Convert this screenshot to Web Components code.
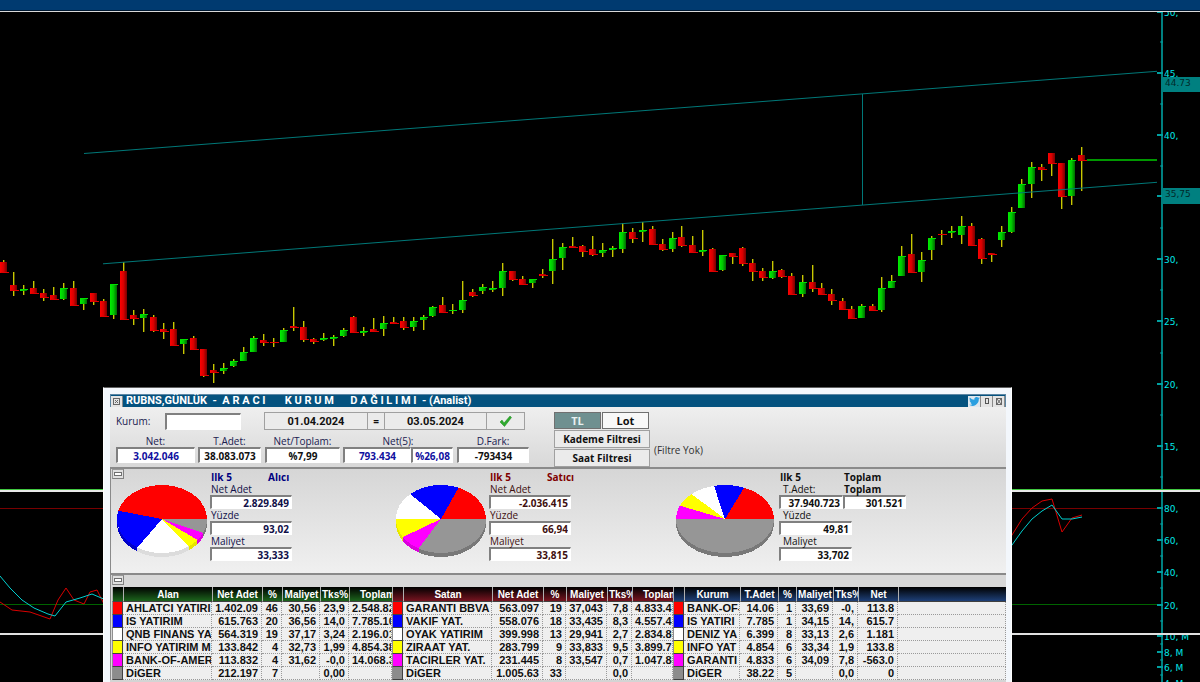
<!DOCTYPE html>
<html lang="tr">
<head>
<meta charset="utf-8">
<title>RUBNS - Aracı Kurum Dağılımı</title>
<style>
html,body{margin:0;background:#000}
body{font-family:"Open Sans","Noto Sans",sans-serif}
</style>
</head>
<body>
<trading-desk></trading-desk>
<script>
const NAVY='#003a70';

/* Price scale drawn on the right side of a chart pane */
class PriceAxis extends HTMLElement{
  connectedCallback(){
    const h=+this.getAttribute('span');
    const pct=v=>(v/h*100)+'%';
    const major=JSON.parse(this.getAttribute('major'));
    const minor=JSON.parse(this.getAttribute('minor'));
    const tags=JSON.parse(this.getAttribute('tags')||'[]');
    let s='<rect x="4" y="0" width="2" height="100%" fill="#008080"/>';
    for(const [t,y] of major){
      s+=`<line x1="0" x2="6" y1="${pct(y)}" y2="${pct(y)}" stroke="#00a0a0" stroke-width="2"/>`;
      s+=`<text x="7" y="${pct(y)}" dy="4">${t}</text>`;
    }
    for(const y of minor)s+=`<line x1="3" x2="6" y1="${pct(y)}" y2="${pct(y)}" stroke="#00a0a0"/>`;
    for(const [t,y,hh] of tags){
      s+=`<rect x="5" y="${pct(y)}" width="40" height="${hh}" fill="#008080"/>`;
      s+=`<text class="tag" x="8" y="${pct(y)}" dy="9">${t}</text>`;
    }
    this.attachShadow({mode:'open'}).innerHTML=`<style>
      :host{display:block;overflow:hidden}
      svg{display:block;width:100%;height:100%}
      text{font:9px "DejaVu Sans",sans-serif;fill:#00e8e8}
      .tag{fill:#002a2a}
    </style><svg>${s}</svg>`;
  }
}
customElements.define('price-axis',PriceAxis);

/* Candles: x, body top, body bottom, high, low, direction (1 up) */
const CANDLES=[
[4,262,273,260,272,0],[14,285,291,272,296,0],[24,289,291,285,295,1],[34,288,294,281,294,0],[44,293,298,289,301,0],[54,295,300,287,299,0],[64,288,299,283,300,1],[74,288,306,281,305,0],[84,298,304,298,310,1],[94,293,302,293,305,0],[104,301,317,299,316,0],[114,284,315,284,319,1],[124,271,320,262,319,0],[134,315,319,310,325,0],[144,314,318,309,332,1],[154,317,331,315,332,0],[164,329,332,323,339,0],[174,329,346,322,345,0],[184,339,344,339,354,1],[194,338,350,336,349,0],[204,349,376,349,377,0],[214,370,373,364,383,0],[224,368,371,363,374,1],[234,361,366,359,367,1],[244,352,361,347,361,1],[254,338,352,336,351,1],[264,340,343,334,346,0],[274,342,343,338,347,0],[284,330,342,328,342,1],[294,326,328,307,331,0],
[304,327,340,321,342,0],[314,339,342,338,344,0],[324,338,340,333,341,1],[334,337,339,335,346,1],[344,330,336,328,337,1],[354,317,333,316,333,0],[364,331,333,327,336,1],[374,329,332,318,332,0],[384,323,329,316,336,1],[394,322,324,317,324,0],[404,321,328,317,330,0],[414,321,327,317,331,1],[424,317,320,315,330,1],[433,307,316,306,317,1],[443,305,313,297,312,0],[453,310,311,304,314,1],[463,300,310,281,313,1],[473,292,296,289,297,0],[483,287,291,284,294,1],[493,288,290,281,292,1],[503,271,288,263,296,1],[513,271,280,271,281,0],[523,279,285,276,285,0],[533,279,283,279,288,1],[543,274,276,269,278,0],[553,259,271,239,284,1],[563,247,258,243,270,1],[573,246,248,237,247,0],[583,246,252,245,257,0],[593,249,255,236,256,0],
[603,250,253,243,257,1],[613,248,250,246,257,1],[623,232,249,223,253,1],[633,232,239,228,243,0],[643,230,232,222,242,1],[653,229,245,226,245,0],[663,244,250,239,251,0],[673,238,249,232,252,1],[682,237,246,226,247,0],[693,245,253,236,253,0],[703,250,252,230,256,1],[713,249,272,248,272,0],[723,255,270,255,271,1],[733,253,257,253,264,0],[743,248,264,247,266,0],[753,263,272,259,281,0],[763,271,278,268,281,0],[773,271,278,261,279,1],[782,270,277,269,278,0],[792,276,295,273,294,0],[803,282,294,275,297,1],[813,282,289,265,292,0],[822,288,295,283,294,0],[832,294,301,289,305,0],[843,301,310,298,310,0],[852,309,319,306,319,0],[862,306,318,304,318,1],[873,306,311,304,311,0],[882,288,310,277,312,1],[892,281,288,275,288,1],
[902,256,276,246,276,1],[912,254,273,234,273,0],[922,260,272,252,282,1],[932,238,250,236,260,1],[942,234,235,230,245,0],[952,231,233,226,238,1],[962,226,235,216,244,1],[972,226,246,223,246,0],[982,239,259,238,264,0],[992,253,255,253,262,0],[1002,232,240,226,247,1],[1012,212,232,207,233,1],[1022,184,208,179,208,1],[1032,167,184,162,198,1],[1042,167,170,164,181,0],[1052,153,164,153,176,0],[1062,163,197,163,209,0],[1072,160,196,158,205,1],[1082,155,161,147,191,0]];

class CandleChart extends HTMLElement{
  connectedCallback(){
    let s='';
    for(const [x,t,b,hi,lo,up] of CANDLES){
      s+=`<rect x="${x-1}" y="${hi}" width="1" height="${lo-hi}" fill="#c8c800"/><rect x="${x}" y="${hi}" width="1" height="${lo-hi}" fill="#4c4c00"/>`;
      s+=`<rect x="${x-4}" y="${t}" width="7" height="${b-t}" fill="url(#${up?'g':'r'})"/>`;
      s+=up?`<rect x="${x-4}" y="${t}" width="8" height="1" fill="#00e000"/>`:`<rect x="${x-3}" y="${b-1}" width="8" height="1" fill="#e00000"/>`;
    }
    this.attachShadow({mode:'open'}).innerHTML=`<style>
      :host{display:block;min-height:0;overflow:hidden}
      svg{display:block;width:100%;height:100%}
    </style><svg viewBox="0 12 1157 477" preserveAspectRatio="none" shape-rendering="crispEdges" overflow="visible">
    <defs>
      <linearGradient id="g"><stop offset="0" stop-color="#00f000"/><stop offset=".5" stop-color="#00c800"/><stop offset="1" stop-color="#006a00"/></linearGradient>
      <linearGradient id="r"><stop offset="0" stop-color="#ff0000"/><stop offset=".5" stop-color="#d80000"/><stop offset="1" stop-color="#780000"/></linearGradient>
    </defs>${s}
    <g stroke="#007878" fill="none" shape-rendering="auto">
      <path d="M84 153.5L1161 71M103 263.8L1161 182"/><path d="M862.5 94V205"/>
    </g>
    <path d="M1087 160H1161" stroke="#009800" stroke-width="2"/></svg>`;
  }
}
customElements.define('candle-chart',CandleChart);

class OscillatorChart extends HTMLElement{
  connectedCallback(){
    this.attachShadow({mode:'open'}).innerHTML=`<style>
      :host{display:block;min-height:0;overflow:hidden}
      svg{display:block;width:100%;height:100%}
    </style><svg viewBox="0 492 1157 141" preserveAspectRatio="none" fill="none">
      <path d="M0 508.5H1161" stroke="#780000"/><path d="M0 604.5H1161" stroke="#006400"/>
      <path stroke="#d80000" d="M0 602L12 610L30 612L50 619L58 600L66 588L74 600L84 604L90 592L97 590L106 608M1008 541L1012 535L1022 519L1032 508L1042 501L1052 499L1062 532L1072 518L1082 515"/>
      <path stroke="#00d0d0" d="M0 576L10 588L22 600L34 608L48 614L55 616L66 602L80 598L92 594L106 600M1008 550L1012 545L1022 531L1032 519L1042 511L1052 505L1062 519L1072 519L1082 517"/>
    </svg>`;
  }
}
customElements.define('oscillator-chart',OscillatorChart);

/* Sunken read-only value */
class ValueBox extends HTMLElement{
  connectedCallback(){
    this.attachShadow({mode:'open'}).innerHTML=`<style>
      :host{display:block}
      label{display:block;line-height:12px;font-size:10px;white-space:nowrap;text-align:var(--label-align,left);padding-left:var(--label-pad,1px);color:var(--label-color,inherit)}
      input{display:block;box-sizing:border-box;width:100%;height:var(--box-h,14px);margin:0;padding:0 2px;border:2px solid #fff;border-top-color:#808080;border-left-color:#808080;border-width:2px 1px 1px 2px;border-radius:0;background:#fff;color:inherit;font:bold 10px "Open Sans","Noto Sans",sans-serif;line-height:10px;text-align:var(--value-align,right);outline:0}
    </style><label for="v"></label><input id="v" readonly>`;
    const l=this.shadowRoot.querySelector('label'),i=this.shadowRoot.querySelector('input');
    if(this.hasAttribute('label'))l.textContent=this.getAttribute('label');
    else{l.remove();i.setAttribute('aria-label',this.getAttribute('name'))}
    if(this.hasAttribute('strong'))l.style.fontWeight='bold';
    i.value=this.getAttribute('value');
  }
}
customElements.define('value-box',ValueBox);

/* Tilted pie with a visible rim on its front half */
class PieChart extends HTMLElement{
  connectedCallback(){
    const stops=JSON.parse(this.getAttribute('angles')),rx=+this.getAttribute('rx'),ry=34,d=4;
    const top=['#ff0000','#0000ff','#ffffff','#ffff00','#ff00ff','#969696'];
    const rim=['#c80000','#0000c8','#dcdcdc','#e6e600','#dc00dc','#787878'];
    const W=rx*2+2,H=ry*2+d+2,cx=rx+1,cy=ry+1;
    const P=a=>[cx+rx*Math.cos(a*Math.PI/180),cy-ry*Math.sin(a*Math.PI/180)];
    let s='',f='',a0=0;
    stops.forEach((a1,i)=>{
      const [x0,y0]=P(a0),[x1,y1]=P(a1);
      f+=`<path fill="${top[i]}" d="M${cx} ${cy}L${x0} ${y0}A${rx} ${ry} 0 ${a1-a0>180?1:0} 0 ${x1} ${y1}Z"/>`;
      if(a1>180){
        const b=Math.max(a0,180),[u,v]=P(b);
        s+=`<path fill="${rim[i]}" d="M${u} ${v}A${rx} ${ry} 0 0 0 ${x1} ${y1}V${y1+d}A${rx} ${ry} 0 0 1 ${u} ${v+d}Z"/>`;
      }
      a0=a1;
    });
    this.attachShadow({mode:'open'}).innerHTML=`<style>:host{display:block}svg{display:block}</style><svg width="${W}" height="${H}" shape-rendering="crispEdges">${s}${f}</svg>`;
  }
}
customElements.define('pie-chart',PieChart);

/* One side of the breakdown: pie and slotted figures */
class PieGroup extends HTMLElement{
  connectedCallback(){
    this.attachShadow({mode:'open'}).innerHTML=`<style>
      :host{display:flex;align-items:flex-start}
      .pie{width:var(--pie-w,94px);padding-top:13px;flex:none}
      .head{display:flex;font-size:10px;font-weight:bold;line-height:12px;padding-left:1px;color:var(--head)}
      .head span{flex:none}
      .head span:first-child{width:var(--head-w,57px)}
      .figs{width:82px}
    </style><div class="pie"><slot name="pie"></slot></div><div class="figs"><div class="head"><span>Ilk 5</span><span>${this.getAttribute('side')}</span></div><slot></slot></div>`;
  }
}
customElements.define('pie-group',PieGroup);

class CollapseButton extends HTMLElement{
  connectedCallback(){
    this.attachShadow({mode:'open'}).innerHTML=`<style>
      :host{display:block;width:12px;height:10px}
      button{display:flex;align-items:center;justify-content:center;width:12px;height:10px;padding:0;border:1px solid #808080;border-top-color:#999;border-left-color:#999;background:#e0e0e0}
      i{box-sizing:border-box;width:8px;height:4px;border:1px solid #707070;background:#fff}
    </style><button aria-label="Daralt"><i></i></button>`;
  }
}
customElements.define('collapse-button',CollapseButton);

/* Ranking table with coloured row markers */
const SWATCH=['#ff0000','#0000ff','#ffffff','#ffff00','#ff00ff','#8c8c8c'];
const TABLES={
  alan:{tint:'#1c641c',cols:[11,89,50,20,38,29,43],head:['Alan','Net Adet','%','Maliyet','Tks%','Toplam'],rows:[
    ['AHLATCI YATIRI','1.402.09','46','30,56','23,9','2.548.82'],['IS YATIRIM','615.763','20','36,56','14,0','7.785.10'],['QNB FINANS YA','564.319','19','37,17','3,24','2.196.01'],['INFO YATIRIM M','133.842','4','32,73','1,99','4.854.38'],['BANK-OF-AMERI','113.832','4','31,62','-0,0','14.068.3'],['DiGER','212.197','7','','0,00','']]},
  satan:{tint:'#781420',cols:[11,89,51,23,41,25,41],head:['Satan','Net Adet','%','Maliyet','Tks%','Toplam'],rows:[
    ['GARANTI BBVA','563.097','19','37,043','7,8','4.833.45'],['VAKIF YAT.','558.076','18','33,435','8,3','4.557.43'],['OYAK YATIRIM','399.998','13','29,941','2,7','2.834.80'],['ZIRAAT YAT.','283.799','9','33,833','9,5','3.899.71'],['TACIRLER YAT.','231.445','8','33,547','0,7','1.047.84'],['DiGER','1.005.63','33','','0,0','']]},
  kurum:{tint:'#1e4078',cols:[11,56,38,18,37,25,40,0],head:['Kurum','T.Adet','%','Maliyet','Tks%','Net',''],rows:[
    ['BANK-OF-','14.06','1','33,69','-0,','113.8',''],['IS YATIRI','7.785','1','34,15','14,','615.7',''],['DENIZ YA','6.399','8','33,13','2,6','1.181',''],['INFO YAT','4.854','6','33,34','1,9','133.8',''],['GARANTI','4.833','6','34,09','7,8','-563.0',''],['DiGER','38.22','5','','0,0','0','']]}
};
class RankTable extends HTMLElement{
  connectedCallback(){
    const t=TABLES[this.getAttribute('kind')];
    const w=t.cols.includes(0)?'100%':t.cols.reduce((a,b)=>a+b)+'px';
    this.attachShadow({mode:'open'}).innerHTML=`<style>
      :host{display:block;min-width:0}
      table{width:${w};table-layout:fixed;border-spacing:0;font:bold 11px "Liberation Sans",Arial,sans-serif;color:#101010}
      th,td{padding:0;overflow:hidden;white-space:nowrap;box-sizing:border-box}
      th{height:15px;padding-top:1px;line-height:13px;font-size:10px;color:#fff;background:linear-gradient(#000,${t.tint});border-left:1px solid #b0b0b0;border-bottom:1px solid #404040}
      th.clip{text-align:left;padding-left:1px}
      th.far{padding-left:10px}
      td{height:13px;line-height:12px;background:#efefef;border-right:1px dotted #9a9a9a;border-bottom:1px dotted #9a9a9a;text-align:right;padding-right:3px}
      td.sw{border:1px solid #404040;border-top:0;border-left-color:#909090;padding:0}
      td.name{text-align:left;padding:0 0 0 3px}
      td.clip{text-align:left;padding:0 0 0 3px}
    </style><table><colgroup>${t.cols.map(c=>`<col${c?` style="width:${c}px"`:''}>`).join('')}</colgroup>
    <thead><tr><th></th>${t.head.map(h=>`<th${/Tks|Top/.test(h)?` class="clip${h=='Toplam'?' far':''}"`:''}>${h}</th>`).join('')}</tr></thead>
    <tbody>${t.rows.map((r,i)=>`<tr><td class="sw" style="background:${SWATCH[i]}"></td>${r.map((c,j)=>`<td${j==0?' class="name"':j==5&&t.cols.length==7?' class="clip"':''}>${c}</td>`).join('')}</tr>`).join('')}</tbody></table>`;
  }
}
customElements.define('rank-table',RankTable);

/* Framed MDI window */
class MdiWindow extends HTMLElement{
  connectedCallback(){
    this.attachShadow({mode:'open'}).innerHTML=`<style>
      :host{display:flex;flex-direction:column;box-sizing:border-box;overflow:hidden;background:#f3f7fc;border:1px solid #fff;border-top-color:#606060;border-bottom:0;padding:6px 5px 0 6px}
      header{display:flex;align-items:center;height:12px;background:#04527f;border:1px solid #5c86a4;border-width:1px 1px 0;flex:none}
      h1{flex:1;margin:0 0 0 3px;font:bold 11px/12px Roboto,sans-serif;color:#fff;white-space:pre}
      button{display:flex;align-items:center;justify-content:center;width:12px;height:11px;padding:0;border:1px solid #8a8a8a;border-width:0 1px 0 0;background:#e4e4e4}
      svg{display:block}
      .tw{width:13px;background:#dfe7ee}
      .body{flex:1;min-height:0;background:#d4d4d4}
    </style><header>
      <button aria-label="Menü"><svg width="7" height="7" fill="none" stroke="#666"><rect x=".5" y=".5" width="6" height="6"/><path d="M2 2L5 5M5 2L2 5"/></svg></button>
      <h1><slot name="title"></slot></h1>
      <button class="tw" aria-label="Twitter"><svg width="11" height="9" viewBox="0 0 24 20"><path fill="#2a9fe0" d="M24 2.4a10 10 0 0 1-2.8.8A5 5 0 0 0 23.300.5a10 10 0 0 1-3.100 1.200 4.900 4.900 0 0 0-8.400 4.500A14 14 0 0 1 1.700 1a4.900 4.900 0 0 0 1.500 6.600 5 5 0 0 1-2.200-.6 4.900 4.900 0 0 0 3.900 4.900 5 5 0 0 1-2.200.1 4.900 4.900 0 0 0 4.600 3.400A10 10 0 0 1 0 17.400 14 14 0 0 0 21.500 5z"/></svg></button>
      <button aria-label="Büyüt"><svg width="4" height="6" fill="none" stroke="#555"><rect x=".5" y=".5" width="3" height="5"/></svg></button>
      <button aria-label="Kapat"><svg width="6" height="7" fill="none" stroke="#666"><rect x=".5" y=".5" width="5" height="6"/><path d="M1 1L5 6M5 1L1 6"/></svg></button>
    </header><div class="body"><slot></slot></div>`;
  }
}
customElements.define('mdi-window',MdiWindow);

class QueryPanel extends HTMLElement{
  connectedCallback(){
    this.attachShadow({mode:'open'}).innerHTML=`<style>
      :host{display:flex;box-sizing:border-box;height:62px;padding:5px 0 0 6px;background:linear-gradient(#efefef,#d8d8d8);border-bottom:2px solid #8a8a8a;font-size:10px;color:#202050}
      .main{width:438px;flex:none}
      .row{display:flex;align-items:center}
      .row label{width:49px}
      #k{box-sizing:border-box;width:76px;height:17px;margin:0 23px 0 0;border:2px solid #fff;border-color:#808080 #fff #fff #808080;border-width:2px 1px 1px 2px;background:#fff}
      button,.date{box-sizing:border-box;display:flex;align-items:center;justify-content:center;height:18px;margin:0;padding:0;border:1px solid #a0a0a0;border-radius:0;background:#ebebeb;font:bold 10px "Open Sans","Noto Sans",sans-serif;color:#101010}
      .date{width:103px;border-right:0;text-align:center;font:bold 11px Roboto,sans-serif}
      .date.b{width:102px}
      .eq{width:17px;border-right:0}
      .ok{width:39px}
      .vals{display:flex;margin-top:5px;--label-align:center;--label-pad:0;--value-align:center;--box-h:16px;--label-color:#202050;color:#101010}
      .vals value-box{flex:none}
      .pair{width:110px;margin-right:4px}
      .pair label{display:block;text-align:center;line-height:12px;color:#202050}
      .pair div{display:flex}
      .blue{color:#1010a0}
      .side{width:96px;display:flex;flex-direction:column;gap:1px;flex:none}
      .unit{display:flex;gap:1px;margin-right:1px}
      .unit button{flex:1;height:17px;font-size:11px;border-color:#707070;background:#f8f8f8}
      .unit .on{background:#6f9090;color:#e8f0f0}
      .side>button{width:96px}
      .note{align-self:flex-end;padding:0 0 11px 4px;line-height:12px;color:#303030}
    </style>
    <div class="main">
      <div class="row"><label for="k">Kurum:</label><input id="k" type="text">
        <input class="date" aria-label="Başlangıç" value="01.04.2024"><button class="eq">=</button><input class="date b" aria-label="Bitiş" value="03.05.2024">
        <button class="ok" aria-label="Uygula"><svg width="13" height="11" viewBox="0 0 13 11"><path d="M1 6L3 4L5 7L11 0L12.500 1.500L5.500 10.500Z" fill="#2eaa2e" stroke="#1c8a1c" stroke-width=".5"/></svg></button></div>
      <div class="vals">
        <value-box class="blue" label="Net:" value="3.042.046" style="width:79px;margin-right:3px"></value-box>
        <value-box label="T.Adet:" value="38.083.073" style="width:63px;margin-right:4px"></value-box>
        <value-box label="Net/Toplam:" value="%7,99" style="width:75px;margin-right:3px"></value-box>
        <div class="pair blue"><label>Net(5):</label><div><value-box name="Net(5) adet" value="793.434" style="width:68px"></value-box><value-box name="Net(5) yüzde" value="%26,08" style="width:42px"></value-box></div></div>
        <value-box label="D.Fark:" value="-793434" style="width:72px"></value-box>
      </div>
    </div>
    <div class="side"><div class="unit"><button class="on">TL</button><button>Lot</button></div><button>Kademe Filtresi</button><button>Saat Filtresi</button></div>
    <div class="note">(Filtre Yok)</div>`;
  }
}
customElements.define('query-panel',QueryPanel);

class BrokerReport extends HTMLElement{
  connectedCallback(){
    this.attachShadow({mode:'open'}).innerHTML=`<style>
      :host{display:block}
      .pies{position:relative;display:grid;grid-template-columns:279px 280px 1fr;box-sizing:border-box;height:104px;padding:2px 0 0 5px;background:linear-gradient(#d6d6d6,#f0f0f0);border-left:1px solid #8a8a8a}
      .pies>collapse-button{position:absolute;left:1px;top:0}
      .buy{--head:#000080;color:#101048}
      .sell{--head:#800000;color:#401010}
      .all{--pie-w:104px;--head-w:64px;--head:#101010;color:#101010}
      .two{display:grid;grid-template-columns:64px 63px}
      .rest{width:73px;--label-pad:4px}
      .rank{border:solid #8a8a8a;border-width:2px 0 0 1px;background:#d8d8d8}
      .rank collapse-button{margin:0 0 0 1px;padding-bottom:2px}
      .tabs{display:flex;padding-left:1px}
      .tabs rank-table{flex:none}
      .tabs rank-table:last-child{flex:1}
    </style>
    <query-panel></query-panel>
    <section class="pies">
      <collapse-button></collapse-button>
      <pie-group class="buy" side="Alıcı"><pie-chart slot="pie" rx="45" angles="[166,237,307,322,336,360]"></pie-chart>
        <value-box label="Net Adet" value="2.829.849"></value-box><value-box label="Yüzde" value="93,02"></value-box><value-box label="Maliyet" value="33,333"></value-box></pie-group>
      <pie-group class="sell" side="Satıcı"><pie-chart slot="pie" rx="45" angles="[67,133,180,212,240,360]"></pie-chart>
        <value-box label="Net Adet" value="-2.036.415"></value-box><value-box label="Yüzde" value="66,94"></value-box><value-box label="Maliyet" value="33,815"></value-box></pie-group>
      <pie-group class="all" side="Toplam"><pie-chart slot="pie" rx="49" angles="[67,103,133,157,180,360]"></pie-chart>
        <div class="two"><value-box label="T.Adet:" value="37.940.723" style="--label-pad:4px"></value-box><value-box strong label="Toplam" value="301.521"></value-box></div>
        <div class="rest"><value-box label="Yüzde" value="49,81"></value-box><value-box label="Maliyet" value="33,702"></value-box></div></pie-group>
    </section>
    <section class="rank"><collapse-button></collapse-button>
      <div class="tabs"><rank-table kind="alan"></rank-table><rank-table kind="satan"></rank-table><rank-table kind="kurum"></rank-table></div>
    </section>`;
  }
}
customElements.define('broker-report',BrokerReport);

class TradingDesk extends HTMLElement{
  connectedCallback(){
    this.attachShadow({mode:'open'}).innerHTML=`<style>
      :host{position:relative;display:flex;flex-direction:column;height:100vh;min-height:500px;overflow:hidden;background:#000}
      .bar{height:10px;background:${NAVY};border-bottom:1px solid #001830;flex:none}
      .pane{display:grid;grid-template-columns:1fr 43px;flex:none}
      .pane>*{height:100%;min-height:0}
      .price{flex:1;min-height:0;border-top:1px solid #d8d8d8;border-bottom:1px solid #40c840;grid-template-rows:minmax(0,1fr)}
      .osc{height:141px;border-top:2px solid #e8e8e8}
      .vol{height:47px;border-top:2px solid #e0e0e0}
      mdi-window{position:absolute;left:103px;right:188px;top:387px;bottom:0}
    </style>
    <div class="bar"></div>
    <div class="pane price"><candle-chart></candle-chart><price-axis span="477" major='[["50,",0],["45,",61],["40,",123],["",184],["30,",247],["25,",309],["20,",372],["15,",434]]' minor='[30,92,154,216,278,341,403,465]' tags='[["44.73",65,15],["35,75",176,16]]'></price-axis></div>
    <div class="pane osc"><oscillator-chart></oscillator-chart><price-axis span="141" major='[["80,",16],["60,",48],["40,",80],["20,",113]]' minor='[32,64,96,129]'></price-axis></div>
    <div class="pane vol"><div></div><price-axis span="47" major='[["10, M",1],["8, M",17],["6, M",32],["4, M",48]]' minor='[9,25,40]'></price-axis></div>
    <mdi-window><span slot="title">RUBNS,GÜNLÜK  -  A R A C I       K U R U M      D A Ğ I L I M I  - (Analist)</span><broker-report></broker-report></mdi-window>`;
  }
}
customElements.define('trading-desk',TradingDesk);
</script>
</body>
</html>
